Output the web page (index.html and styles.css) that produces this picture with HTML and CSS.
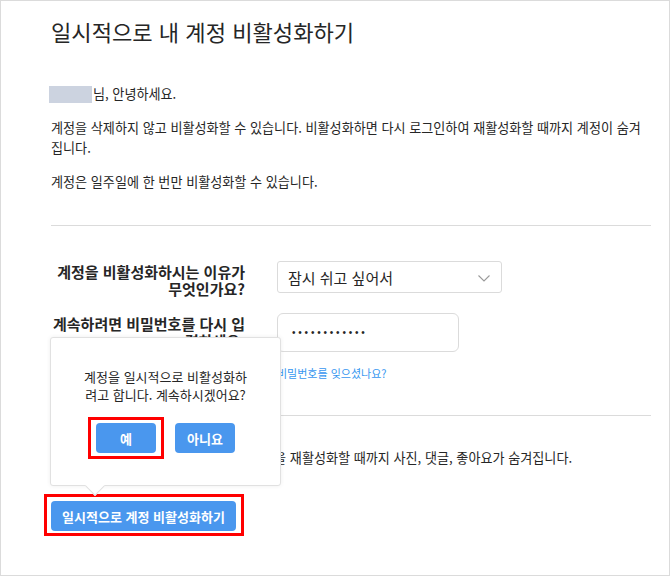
FILE: index.html
```html
<!DOCTYPE html>
<html lang="ko">
<head>
<meta charset="utf-8">
<title>일시적으로 내 계정 비활성화하기</title>
<link rel="stylesheet" href="styles.css">
</head>
<body>
<div class="page">
  <h1 class="title">일시적으로 내 계정 비활성화하기</h1>
  <div class="intro">
    <p class="greeting"><span class="name-mask"></span>님, 안녕하세요.</p>
    <p>계정을 삭제하지 않고 비활성화할 수 있습니다. 비활성화하면 다시 로그인하여 재활성화할 때까지 계정이 숨겨집니다.</p>
    <p>계정은 일주일에 한 번만 비활성화할 수 있습니다.</p>
  </div>
  <div class="divider"></div>
  <div class="form">
    <div class="label">계정을 비활성화하시는 이유가 무엇인가요?</div>
    <div class="field">
      <div class="select">
        <span>잠시 쉬고 싶어서</span>
        <svg class="chev" width="12" height="7" viewBox="0 0 12 7"><polyline points="0.5,0.5 6,6 11.5,0.5" fill="none" stroke="#9a9a9a" stroke-width="1.1"/></svg>
      </div>
    </div>
    <div class="label">계속하려면 비밀번호를 다시 입력하세요.</div>
    <div class="field">
      <div class="password"><span class="dots">••••••••••••</span></div>
      <a class="forgot">비밀번호를 잊으셨나요?</a>
    </div>
  </div>
  <div class="divider second"></div>
  <p class="notice">아래 버튼을 클릭하면 다시 로그인해 계정을 재활성화할 때까지 사진, 댓글, 좋아요가 숨겨집니다.</p>
  <div class="action">
    <button class="btn btn-main marked">일시적으로 계정 비활성화하기</button>
    <div class="popover">
      <p class="pop-text">계정을 일시적으로 비활성화하려고 합니다. 계속하시겠어요?</p>
      <div class="pop-buttons">
        <button class="btn btn-small marked-yes">예</button>
        <button class="btn btn-small">아니요</button>
      </div>
      <span class="pop-arrow"></span>
    </div>
  </div>
</div>
</body>
</html>
```
FILE: styles.css
```css
* { box-sizing: border-box; }
html, body { margin: 0; padding: 0; background: #fff; }
body {
  font-family: "Noto Sans CJK KR", "Noto Sans", sans-serif;
  color: #262626;
}
.page {
  width: 670px;
  height: 576px;
  border: 1px solid #dbdbdb;
  padding: 15px 18px 0 50px;
  overflow: hidden;
}
.title {
  margin: 0;
  font-size: 22.1px;
  font-weight: 400;
  line-height: 30px;
  color: #262626;
}
.intro { margin-top: 38px; font-size: 13.1px; line-height: 20px; }
.intro p { margin: 0 0 14px 0; }
.intro p:last-child { margin-bottom: 0; }
.greeting { display: flex; align-items: center; }
.name-mask {
  display: inline-block;
  width: 43px;
  height: 17px;
  margin-left: -2px;
  margin-right: 1px;
  background: #ccd3e0;
}
.divider { margin-top: 33px; border-top: 1px solid #dbdbdb; height: 0; }
.form {
  margin-top: 35px;
  display: grid;
  grid-template-columns: 194px 225px;
  column-gap: 32px;
  row-gap: 16px;
  align-items: start;
}
.label {
  font-size: 15px;
  font-weight: 700;
  line-height: 17px;
  padding-top: 2px;
  text-align: right;
  color: #262626;
}
.field { display: flex; flex-direction: column; align-items: flex-start; }
.select {
  width: 225px;
  height: 32px;
  border: 1px solid #dbdbdb;
  border-radius: 3px;
  display: flex;
  align-items: center;
  justify-content: space-between;
  padding: 0 11px 0 10px;
  font-size: 15px;
  color: #262626;
}
.chev { display: block; margin-top: 2px; }
.password {
  width: 182px;
  height: 39px;
  border: 1px solid #dbdbdb;
  border-radius: 6px;
  display: flex;
  align-items: center;
  padding-left: 14px;
}
.dots {
  font-family: "Liberation Sans", sans-serif;
  font-size: 10px;
  letter-spacing: 2.8px;
  color: #262626;
}
.forgot {
  margin-top: 14px;
  font-size: 11px;
  line-height: 15px;
  color: #3897f0;
  text-decoration: none;
}
.divider.second { margin-top: 34px; }
.notice {
  margin: 32px 0 0 0;
  font-size: 13.1px;
  line-height: 20px;
  white-space: nowrap;
}
.action { position: relative; margin-top: 33px; }
.btn {
  font-family: "Noto Sans CJK KR", "Noto Sans", sans-serif;
  font-size: 13px;
  font-weight: 700;
  color: #fff;
  background: #4a97ee;
  border: 0;
  border-radius: 4px;
  height: 30px;
  padding: 0;
  position: relative;
}
.btn-main { width: 185px; }
.btn-small { width: 60px; }
.marked::after, .marked-yes::after {
  content: "";
  position: absolute;
  border: 3px solid #ff0000;
  pointer-events: none;
}
.marked::after { top: -7px; bottom: -5px; left: -7px; right: -8px; }
.marked-yes::after { top: -6px; bottom: -6px; left: -8px; right: -8px; }
.popover {
  position: absolute;
  left: -1px;
  bottom: calc(100% + 15px);
  width: 231px;
  background: #fff;
  border: 1px solid #e1e1e1;
  border-radius: 3px;
  box-shadow: 0 0 4px rgba(0, 0, 0, 0.07);
  padding: 30px 32px 32px 32px;
  z-index: 2;
}
.pop-text {
  margin: 0;
  font-size: 13px;
  line-height: 18px;
  text-align: center;
  color: #262626;
}
.pop-buttons {
  margin-top: 19px;
  display: flex;
  justify-content: center;
  gap: 19px;
}
.pop-arrow {
  position: absolute;
  left: 37px;
  bottom: -8px;
  width: 14px;
  height: 14px;
  background: #fff;
  border-right: 1px solid #e1e1e1;
  border-bottom: 1px solid #e1e1e1;
  transform: rotate(45deg);
}
```
